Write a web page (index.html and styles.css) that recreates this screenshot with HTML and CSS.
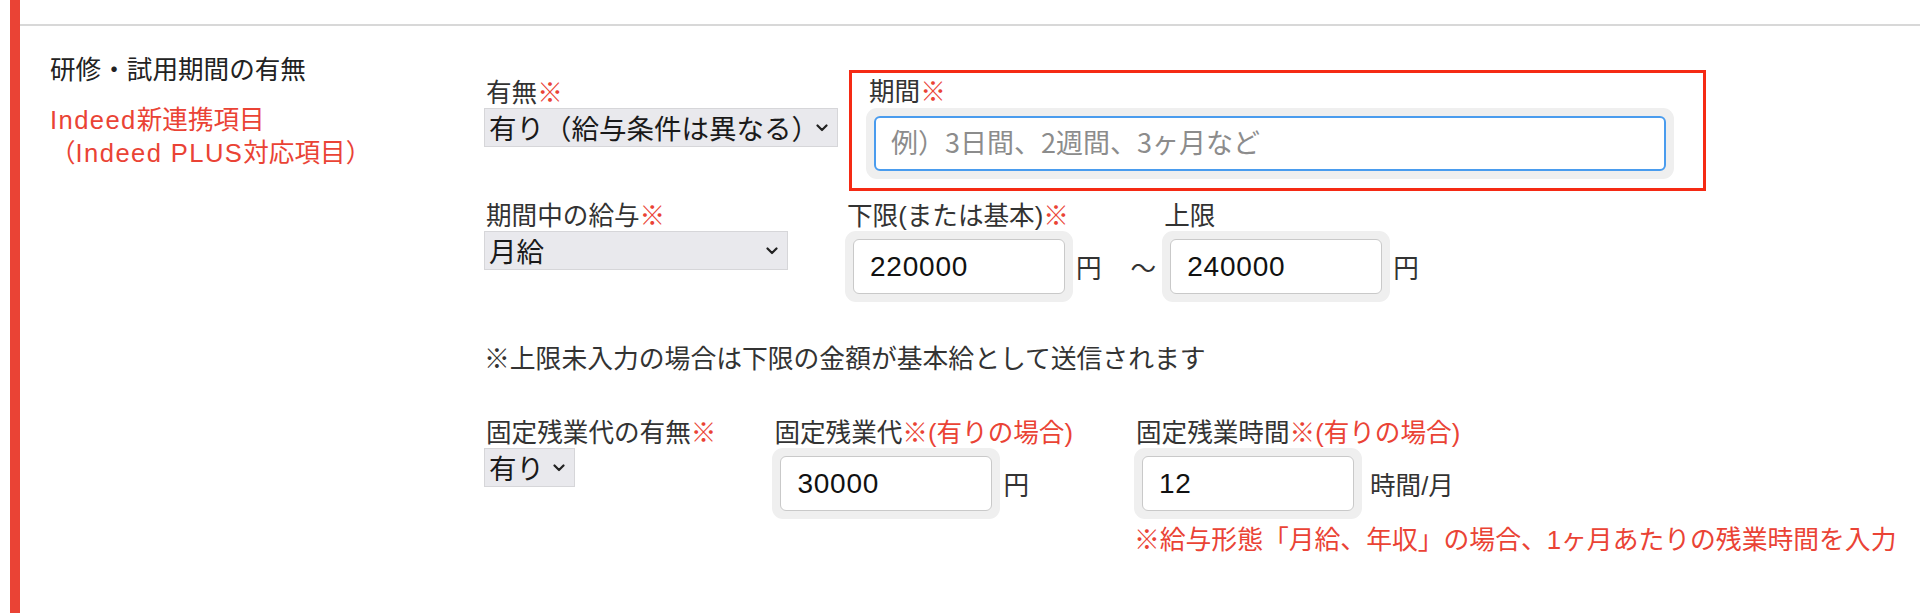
FILE: index.html
```html
<!DOCTYPE html>
<html lang="ja">
<head>
  <title>研修・試用期間の有無</title>
  <meta charset="UTF-8">
  <meta name="viewport" content="width=device-width, initial-scale=1">
  <link rel="stylesheet" href="styles.css">
</head>
<body>

  <div class="section">
    <div class="prev"></div>

    <div class="row">
      <div class="row-head">
        <h3 class="row-title">研修・試用期間の有無</h3>
        <p class="row-note"><span class="en">Indeed</span>新連携項目<br>（<span class="en">Indeed PLUS</span>対応項目）</p>
      </div>

      <div class="row-body">

        <!-- 有無 / 期間 -->
        <div class="line line-1">
          <div class="field field-first">
            <label class="label">有無<span class="req">※</span></label>
            <div class="select-wrap" style="width: 354px;">
              <select class="select">
                <option>有り（給与条件は異なる）</option>
                <option>有り（給与条件は同じ）</option>
                <option>無し</option>
              </select>
              <svg class="chev" width="12" height="8" viewBox="0 0 12 8"><path d="M1.5 1.5 L6 6 L10.5 1.5" /></svg>
            </div>
          </div>

          <div class="field highlight">
            <label class="label">期間<span class="req">※</span></label>
            <div class="input-wrap input-wrap-wide">
              <input class="input is-focus" type="text" placeholder="例）3日間、2週間、3ヶ月など">
            </div>
          </div>
        </div>

        <!-- 期間中の給与 -->
        <div class="line line-2">
          <div class="field field-pay">
            <label class="label">期間中の給与<span class="req">※</span></label>
            <div class="select-wrap" style="width: 304px;">
              <select class="select">
                <option>月給</option>
                <option>時給</option>
                <option>日給</option>
                <option>年収</option>
              </select>
              <svg class="chev" width="12" height="8" viewBox="0 0 12 8"><path d="M1.5 1.5 L6 6 L10.5 1.5" /></svg>
            </div>
          </div>

          <div class="field">
            <label class="label">下限(または基本)<span class="req">※</span></label>
            <div class="input-line">
              <div class="input-wrap"><input class="input" type="text" value="220000"></div>
              <span class="unit">円</span>
              <span class="tilde">〜</span>
            </div>
          </div>

          <div class="field">
            <label class="label">上限</label>
            <div class="input-line">
              <div class="input-wrap"><input class="input" type="text" value="240000"></div>
              <span class="unit">円</span>
            </div>
          </div>
        </div>

        <p class="hint">※上限未入力の場合は下限の金額が基本給として送信されます</p>

        <!-- 固定残業 -->
        <div class="line line-3">
          <div class="field">
            <label class="label">固定残業代の有無<span class="req">※</span></label>
            <div class="select-wrap" style="width: 91px;">
              <select class="select">
                <option>有り</option>
                <option>無し</option>
              </select>
              <svg class="chev" width="12" height="8" viewBox="0 0 12 8"><path d="M1.5 1.5 L6 6 L10.5 1.5" /></svg>
            </div>
          </div>

          <div class="field">
            <label class="label">固定残業代<span class="req">※(有りの場合)</span></label>
            <div class="input-line">
              <div class="input-wrap"><input class="input" type="text" value="30000"></div>
              <span class="unit">円</span>
            </div>
          </div>

          <div class="field field-hours">
            <label class="label">固定残業時間<span class="req">※(有りの場合)</span></label>
            <div class="input-line">
              <div class="input-wrap"><input class="input" type="text" value="12"></div>
              <span class="unit unit-wide">時間/月</span>
            </div>
            <p class="warn">※給与形態「月給、年収」の場合、1ヶ月あたりの残業時間を入力</p>
          </div>
        </div>

      </div>
    </div>
  </div>

</body>
</html>
```

FILE: styles.css
```css
* {
  box-sizing: border-box;
}

body {
  margin: 0;
  background: #fff;
  color: #333;
  font-family: "Liberation Sans", "Noto Sans CJK JP", sans-serif;
  font-size: 25.6px;
}

.section {
  margin-left: 10px;
  min-height: 613px;
  border-left: 10px solid #ea4335;
}

.prev {
  height: 26px;
  border-bottom: 2px solid #d8d8d8;
}

.row {
  display: flex;
  padding: 29px 0 0 30px;
}

.row-head {
  flex: none;
  width: 434px;
}

.row-title {
  margin: 0;
  font-size: 25.6px;
  font-weight: normal;
  line-height: 30px;
  color: #222;
}

.row-note {
  margin: 19px 0 0;
  line-height: 33px;
  color: #ea4335;
}

.en {
  letter-spacing: 1.4px;
}

.row-body {
  margin-top: 15px;
}

.line {
  display: flex;
  align-items: flex-start;
}

.line-1 {
  gap: 11px;
}

.line-2 {
  margin-top: 10px;
}

.field-pay {
  margin-right: 57px;
}

.line-3 {
  margin-top: 44px;
  gap: 56px;
}

.field-hours {
  margin-left: 5px;
}

.field {
  display: flex;
  flex-direction: column;
  align-items: flex-start;
}

.field-first {
  margin-top: 8px;
}

.label {
  display: block;
  padding-left: 2px;
  line-height: 30px;
  color: #333;
  white-space: nowrap;
}

.req {
  color: #ea4335;
}

/* select */
.select-wrap {
  position: relative;
  height: 39px;
}

.select {
  -webkit-appearance: none;
  appearance: none;
  width: 100%;
  height: 100%;
  margin: 0;
  padding: 0 28px 0 4px;
  border: 1px solid #d6d6d9;
  border-radius: 0;
  background: #e9e9ed;
  color: #1a1a1a;
  font-family: "Noto Sans CJK JP", sans-serif;
  font-size: 27.5px;
  line-height: 37px;
  outline: none;
}

.chev {
  position: absolute;
  right: 10px;
  top: 50%;
  transform: translateY(-50%);
  pointer-events: none;
}

.chev path {
  fill: none;
  stroke: #222;
  stroke-width: 2.2;
  stroke-linecap: round;
  stroke-linejoin: round;
}

/* inputs */
.input-wrap {
  width: 228px;
  padding: 8px;
  border-radius: 11px;
  background: #efefef;
}

.input-wrap-wide {
  width: 808px;
}

.input {
  display: block;
  width: 100%;
  height: 55px;
  margin: 0;
  padding: 0 0 0 16px;
  border: 1px solid #c9c9c9;
  border-radius: 6px;
  background: #fff;
  color: #111;
  font-family: "Liberation Sans", Arial, sans-serif;
  font-size: 28px;
  letter-spacing: 0.8px;
  outline: none;
}

.input::placeholder {
  color: #8c8c8c;
  font-family: "Noto Sans CJK JP", sans-serif;
  font-size: 27px;
  letter-spacing: 0;
}

.input.is-focus {
  border: 2px solid #4a9cee;
  padding-left: 15px;
}

.input-line {
  display: flex;
  align-items: center;
}

.unit {
  margin-left: 3px;
  color: #333;
}

.unit-wide {
  margin-left: 8px;
}

.tilde {
  margin: 0 6px 0 29px;
  color: #333;
}

/* highlighted field */
.highlight {
  padding: 4px 29px 9px 14px;
  border: 3px solid #f52a14;
}

.highlight .label {
  padding-left: 3px;
  line-height: 31px;
}

.hint {
  margin: 42px 0 0;
  font-size: 25.8px;
  line-height: 30px;
  color: #333;
}

.warn {
  margin: 6px 0 0;
  font-size: 25.8px;
  line-height: 30px;
  color: #ea4335;
  white-space: nowrap;
}
```
